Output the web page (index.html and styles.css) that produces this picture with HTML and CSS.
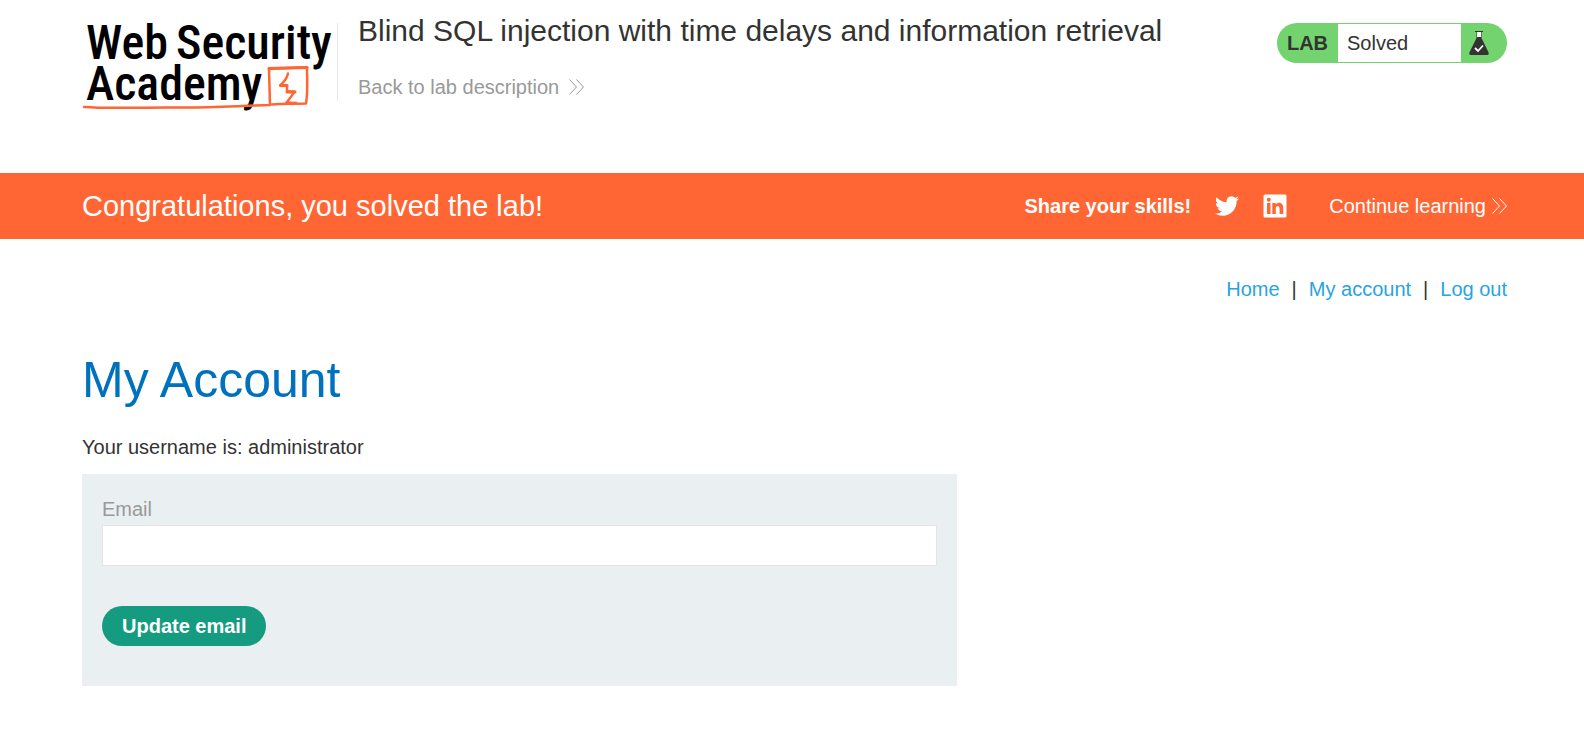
FILE: index.html
```html
<!DOCTYPE html>
<html lang="en">
<head>
<meta charset="utf-8">
<meta name="viewport" content="width=device-width, initial-scale=1">
<title>Blind SQL injection with time delays and information retrieval</title>
<link rel="stylesheet" href="styles.css">
</head>
<body>
<header class="lab-header container">
  <a class="logo" href="#" aria-label="Web Security Academy">
    <svg width="252" height="90" viewBox="0 0 252 90">
      <g class="logo-text">
        <text x="4" y="36">Web</text>
        <text x="94" y="36">Security</text>
        <text x="4" y="77">Academy</text>
      </g>
      <g fill="none" stroke="#ff6633" stroke-linejoin="round" stroke-linecap="round">
        <path d="M2 84C30 86 60 84 95 84.500S160 82.500 188 82L187 46C200 44.500 213 45 225 44.500C225 57 226 69 224 80.500C213 81 202 80 190 81.500" stroke-width="2.500"/>
        <path d="M187 45.500L225 44.500" stroke-width="3.200"/>
        <path d="M206 50.500C205 55 202 59 198.500 62L205 62.500V68.500H212.500C210 73 208 75 204.500 79.500L214 80" stroke-width="2.500"/>
        <path d="M198.500 62.500H205M205 69H213" stroke-width="3"/>
      </g>
    </svg>
  </a>
  <div class="lab-title">
    <h2>Blind SQL injection with time delays and information retrieval</h2>
    <a class="back-link" href="#">Back to lab description
      <svg class="chevrons" width="15" height="16" viewBox="0 0 15 16"><path d="M.500 .500L7.500 8L.500 15.500M7.500 .500L14.500 8L7.500 15.500"/></svg>
    </a>
  </div>
  <div class="lab-status">
    <span class="lab-tag">LAB</span>
    <span class="lab-state">Solved</span>
    <span class="lab-flask">
      <svg width="20" height="26" viewBox="0 0 20 26"><path d="M6 1.500H14" stroke="#333332"/><path d="M7.500 2V8L.400 22.500Q-.300 25 2 25H18Q20.300 25 19.600 22.500L12.500 8V2Z" fill="#333332"/><path d="M8 2H12V7H8Z" fill="#fff"/><path d="M6 18L9 21L14 15.500" fill="none" stroke="#fff" stroke-width="1.800"/></svg>
    </span>
  </div>
</header>
<section class="banner">
  <div class="banner-row container">
    <h4>Congratulations, you solved the lab!</h4>
    <div class="share">
      <span class="share-label">Share your skills!</span>
      <a href="#" aria-label="Twitter"><svg width="24" height="24" viewBox="0 0 24 24" fill="#fff"><path d="M23.950 4.570a10 10 0 0 1-2.820.770 4.960 4.960 0 0 0 2.160-2.720c-.950.550-2 .960-3.130 1.180a4.920 4.920 0 0 0-8.380 4.480C7.690 8.090 4.070 6.130 1.640 3.160a4.820 4.820 0 0 0-.670 2.480c0 1.710.870 3.210 2.190 4.100a4.900 4.900 0 0 1-2.230-.620v.060a4.920 4.920 0 0 0 3.950 4.830 5 5 0 0 1-2.210.080 4.940 4.940 0 0 0 4.600 3.420A9.870 9.870 0 0 1 0 19.540a13.990 13.990 0 0 0 7.560 2.210c9.050 0 13.990-7.500 13.990-13.980 0-.210 0-.420-.020-.630A9.940 9.940 0 0 0 24 4.590z"/></svg></a>
      <a href="#" aria-label="LinkedIn"><svg width="24" height="24" viewBox="0 0 24 24" fill="#fff"><path fill-rule="evenodd" d="M2 .500H22Q23.500 .500 23.500 2V22Q23.500 23.500 22 23.500H2Q.500 23.500 .500 22V2Q.500 .500 2 .500ZM4 9V20H7.500V9ZM5.750 3.800A2 2 0 1 0 5.750 7.800A2 2 0 1 0 5.750 3.800ZM9.300 9V20H12.800V14.500C12.800 11 16.600 11 16.600 14.500V20H20.200V13.800C20.200 8 14.600 7.800 12.600 10.600V9Z"/></svg></a>
      <a class="continue" href="#">Continue learning
        <svg class="chevrons" width="15" height="16" viewBox="0 0 15 16"><path d="M.500 .500L7.500 8L.500 15.500M7.500 .500L14.500 8L7.500 15.500"/></svg>
      </a>
    </div>
  </div>
</section>
<main class="container">
  <nav class="top-links">
    <a href="#">Home</a><span>|</span><a href="#">My account</a><span>|</span><a href="#">Log out</a>
  </nav>
  <h1>My Account</h1>
  <p class="username">Your username is: administrator</p>
  <form class="email-form">
    <label for="email">Email</label>
    <input id="email" type="email" name="email">
    <button type="submit">Update email</button>
  </form>
</main>
</body>
</html>
```
FILE: styles.css
```css
* { box-sizing: border-box; }
body {
  margin: 0;
  background: #fff;
  color: #333332;
  font-family: "Liberation Sans", Arial, sans-serif;
  font-size: 20px;
  line-height: 30px;
}
h1, h2, h4, p { margin: 0; font-weight: 400; }
a { color: #29a3e2; text-decoration: none; }
svg { display: block; overflow: visible; }
.container { padding-left: 82px; padding-right: 77px; }

.lab-header { display: flex; align-items: flex-start; padding-top: 23px; padding-bottom: 60px; }
.logo-text { font-family: "Roboto Condensed", "Roboto", sans-serif; font-size: 48px; font-weight: 500; fill: #000; }
.lab-title { flex: 1; margin-left: 3px; padding-left: 20px; border-left: 1px solid #e8e8e8; height: 78px; }
.lab-title h2 { font-size: 30px; line-height: 36px; margin-top: -10px; }
.back-link { display: inline-flex; align-items: center; gap: 10px; margin-top: 23px; color: #999; }
.chevrons path { fill: none; stroke: currentColor; }

.lab-status { display: flex; width: 230px; height: 40px; padding: 1px 0; border-radius: 20px; background: #72d36f; line-height: 38px; }
.lab-tag { width: 61px; text-align: center; font-weight: 700; }
.lab-state { flex: 1; padding-left: 9px; background: #fff; }
.lab-flask { width: 46px; padding: 6px 8px; }

.banner { background: #ff6633; color: #fff; }
.banner-row { display: flex; align-items: center; justify-content: space-between; min-height: 66px; }
.banner h4 { font-size: 29px; }
.share { display: flex; align-items: center; gap: 24px; }
.share a { color: #fff; }
.share-label { font-weight: 700; }
.share .continue { display: flex; align-items: center; gap: 6px; margin-left: 18px; }

.top-links { display: flex; justify-content: flex-end; gap: 12px; padding-top: 35px; }
h1 { margin-top: 46px; font-size: 50px; line-height: 60px; color: #0071bc; }
.username { margin-top: 22px; }
.email-form { max-width: 875px; margin-top: 12px; padding: 20px 20px 40px; background: #eaeff2; }
.email-form label { display: block; line-height: 31px; color: #999; }
.email-form input { display: block; width: 100%; height: 41px; padding: 0 10px; border: 1px solid #e4e4e4; background: #fff; font: inherit; }
.email-form button { margin-top: 40px; display: block; height: 40px; padding: 0 20px; border: 0; border-radius: 20px; background: #159b80; color: #fff; font: inherit; font-weight: 700; }
```
